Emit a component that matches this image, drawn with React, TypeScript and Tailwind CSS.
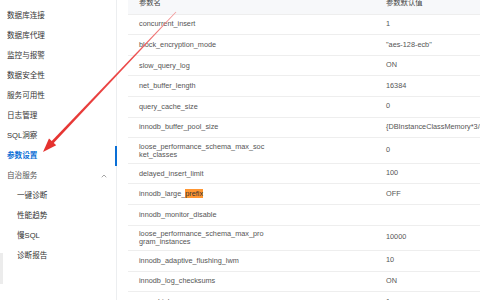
import React from "react";
import { ChevronUp } from "lucide-react";

const font = { fontFamily: '"Liberation Sans", "Noto Sans CJK SC", sans-serif' };

const navTop = ["数据库连接", "数据库代理", "监控与报警", "数据安全性", "服务可用性", "日志管理", "SQL洞察"];
const navSub = ["一键诊断", "性能趋势", "慢SQL", "诊断报告"];

type Row = { name: React.ReactNode; value: string; tall?: boolean };

const rows: Row[] = [
  { name: "concurrent_insert", value: "1" },
  { name: "block_encryption_mode", value: "\"aes-128-ecb\"" },
  { name: "slow_query_log", value: "ON" },
  { name: "net_buffer_length", value: "16384" },
  { name: "query_cache_size", value: "0" },
  { name: "innodb_buffer_pool_size", value: "{DBInstanceClassMemory*3/4}" },
  {
    name: (
      <>
        loose_performance_schema_max_soc
        <br />
        ket_classes
      </>
    ),
    value: "0",
    tall: true,
  },
  { name: "delayed_insert_limit", value: "100" },
  {
    name: (
      <>
        innodb_large_<span className="bg-[#ff9632] text-[#333]">prefix</span>
      </>
    ),
    value: "OFF",
  },
  { name: "innodb_monitor_disable", value: "" },
  {
    name: (
      <>
        loose_performance_schema_max_pro
        <br />
        gram_instances
      </>
    ),
    value: "10000",
    tall: true,
  },
  { name: "innodb_adaptive_flushing_lwm", value: "10" },
  { name: "innodb_log_checksums", value: "ON" },
  { name: "sync_binlog", value: "1" },
];

function Sidebar() {
  return (
    <div className="relative w-[117px] shrink-0 border-r border-[#eceef0] pt-[6px] text-[7.6px] text-[#333]">
      {navTop.map((label) => (
        <div key={label} className="flex h-[20px] items-center pl-[7px]">
          {label}
        </div>
      ))}
      <div className="relative -mr-px flex h-[20px] items-center border-r-2 border-[#0a6fd6] pl-[7px] font-bold text-[#0a6fd6]">
        参数设置
      </div>
      <div className="flex h-[20px] items-center justify-between pl-[7px] pr-[8px] text-[#555]">
        <span>自治服务</span>
        <ChevronUp className="size-[8px] text-[#777]" strokeWidth={2} />
      </div>
      {navSub.map((label) => (
        <div key={label} className="flex h-[20px] items-center pl-[17px]">
          {label}
        </div>
      ))}
      <div className="absolute left-0 top-[253px] h-[31px] w-[3px] bg-[#ececec]" />
    </div>
  );
}

function ParamTable() {
  return (
    <div className="ml-[11px] -mt-[6px] flex-1 text-[7.3px] text-[#555]">
      <div className="flex h-[20.7px] items-center bg-[#f7f8fa] border-b border-[#eeeeee] text-[#444]">
        <div className="w-[247px] pl-[11px]">参数名</div>
        <div className="pl-[11px]">参数默认值</div>
      </div>
      {rows.map((r, i) => (
        <div
          key={i}
          className={`flex items-center border-b border-[#eeeeee] ${r.tall ? "h-[25.5px]" : "h-[20.6px]"}`}
        >
          <div className="w-[247px] pl-[11px] leading-[8px] whitespace-nowrap">{r.name}</div>
          <div className="pl-[11px] whitespace-nowrap">{r.value}</div>
        </div>
      ))}
    </div>
  );
}

function Arrow() {
  return (
    <svg className="pointer-events-none absolute left-0 top-0" width="480" height="300">
      <defs>
        <linearGradient id="fade" x1="176" y1="12" x2="50" y2="144" gradientUnits="userSpaceOnUse">
          <stop offset="0" stopColor="#f29a9a" />
          <stop offset="0.35" stopColor="#ec4b4b" />
          <stop offset="1" stopColor="#e5322f" />
        </linearGradient>
      </defs>
      <polygon points="176.3,12.2 175.7,11.8 50.3,142.6 52.3,144.4" fill="url(#fade)" />
      <polygon points="43,152 49,138.4 56.2,145.2" fill="#e5322f" />
    </svg>
  );
}

export default function App() {
  return (
    <div className="relative h-[300px] w-[480px] overflow-hidden bg-white" style={font}>
      <div className="flex h-full">
        <Sidebar />
        <ParamTable />
      </div>
      <Arrow />
    </div>
  );
}
